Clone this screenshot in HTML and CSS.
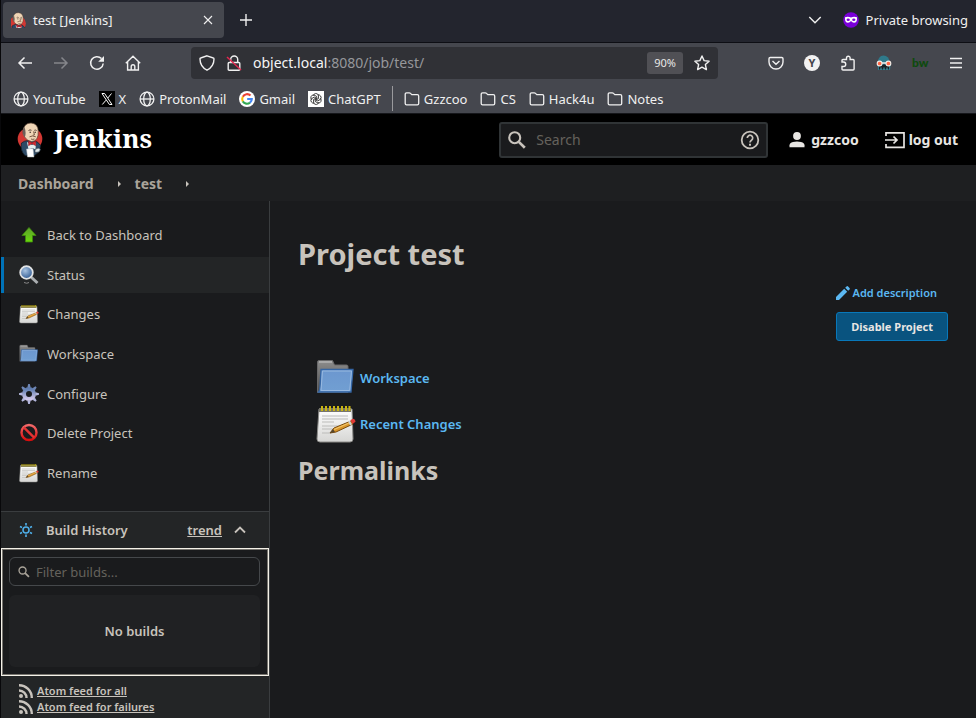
FILE: index.html
```html
<!DOCTYPE html>
<html lang="en">
<head>
<meta charset="utf-8">
<meta name="viewport" content="width=device-width, initial-scale=1">
<title>test [Jenkins]</title>
<link rel="stylesheet" href="styles.css">
</head>
<body>
<svg class="defs" aria-hidden="true">
  <defs>
    <linearGradient id="g-blue" x1="0" y1="0" x2="0" y2="1"><stop offset="0" stop-color="#6c97cf"/><stop offset="1" stop-color="#719fd2"/></linearGradient>
    <linearGradient id="g-grey" x1="0" y1="0" x2="0" y2="1"><stop offset="0" stop-color="#8d8d8d"/><stop offset="1" stop-color="#4c4c4c"/></linearGradient>
    <linearGradient id="g-green" x1="0" y1="0" x2="0" y2="1"><stop offset="0" stop-color="#5d9f2c"/><stop offset="1" stop-color="#69d80d"/></linearGradient>
    <linearGradient id="g-red" x1="0" y1="0" x2="0" y2="1"><stop offset="0" stop-color="#f26a6a"/><stop offset="1" stop-color="#d90d0d"/></linearGradient>
    <linearGradient id="g-gear" x1="0" y1="0" x2="0" y2="1"><stop offset="0" stop-color="#5f7db0"/><stop offset="1" stop-color="#d2c8ea"/></linearGradient>
    <linearGradient id="g-page" x1="0" y1="0" x2="0" y2="1"><stop offset="0" stop-color="#ffffff"/><stop offset="1" stop-color="#d6d6d4"/></linearGradient>
    <radialGradient id="g-lens" cx=".4" cy=".35" r=".7"><stop offset="0" stop-color="#a9c4e2"/><stop offset="1" stop-color="#2b568f"/></radialGradient>
  </defs>
  <symbol id="globe" viewBox="0 0 16 16"><g fill="none" stroke="currentColor" stroke-width="1.3"><circle cx="8" cy="8" r="6.9"/><ellipse cx="8" cy="8" rx="3.3" ry="6.9"/><path d="M1 8h14"/></g></symbol>
  <symbol id="folder" viewBox="0 0 16 16"><path d="M1.2 12.500V3.200Q1.200 1.800 2.600 1.800H5.200Q6 1.800 6.500 2.400L7.800 3.700H13.300Q14.700 3.700 14.700 5.100V12.500Q14.700 13.800 13.300 13.800H2.600Q1.200 13.800 1.200 12.500Z" fill="none" stroke="currentColor" stroke-width="1.300"/></symbol>
  <symbol id="search" viewBox="0 0 24 24"><circle cx="9.500" cy="9.500" r="6" fill="none" stroke="currentColor" stroke-width="2.300"/><path d="M14 14l6.500 6.500" stroke="currentColor" stroke-width="2.900"/></symbol>
  <symbol id="notepad" viewBox="0 0 40 40">
    <path d="M3 5h33l1 30q0 3-3 3H4q-3 0-3-3z" fill="url(#g-page)" stroke="#8b8b88"/>
    <path d="M3 4h32v4H3z" fill="#77756a"/>
    <path d="M6 2v5M10 2v5M14 2v5M18 2v5M22 2v5M26 2v5M30 2v5M33.500 2v5" stroke="#c9b512" stroke-width="2"/>
    <path d="M6 12h26M6 15h26M6 18h12M6 22h24M6 25h18M6 29h9" stroke="#bcbcb9" stroke-width="1.200"/>
    <path d="M14 29l4-5 17-7 2 3-17 8z" fill="#d9962b" stroke="#7a4b0d" stroke-width="1"/>
    <path d="M18 25.500l16-7" stroke="#f2c56a" stroke-width="1.200"/>
    <path d="M14 29l3-4 2 3z" fill="#55452c"/>
    <path d="M33 17l2 4" stroke="#cfd2d4" stroke-width="2"/>
    <path d="M34.500 16l2.500-1.200q2 0 2.500 3L36.500 20z" fill="#e23a35"/>
  </symbol>
  <symbol id="workspace" viewBox="0 0 40 40">
    <path d="M1.500 34.500V4q0-1.500 1.500-1.500H16.500l2 4.500h12q1.500 0 1.500 1.500v26z" fill="url(#g-grey)" stroke="#69696a"/>
    <path d="M3 4h13" stroke="#c8c8c8"/>
    <path d="M5 11.500h32l-2 22.500H2.500Q4 32 4 29z" fill="url(#g-blue)" stroke="#3465a4" stroke-width="1.300"/>
    <path d="M6.500 13h29l-1.800 19.500H5z" fill="none" stroke="#98b9e0" stroke-width="1"/>
  </symbol>
  <symbol id="feed" viewBox="0 0 16 16"><g fill="none" stroke="currentColor" stroke-width="2.400"><path d="M1 7.500a7.500 7.500 0 0 1 7.500 7.500M1 2.200A12.800 12.800 0 0 1 13.800 15"/></g><circle cx="3" cy="13" r="2" fill="currentColor"/></symbol>
  <symbol id="butler" viewBox="0 0 28 36">
    <ellipse cx="14" cy="17" rx="12.300" ry="11.500" fill="#d33833"/>
    <path d="M5.500 21q3-2.500 7-2.500h5q5 1 7 5l-1 6-5 4H9q-5-5-3.500-12.500z" fill="#2d4a66" stroke="#152330" stroke-width=".8"/>
    <path d="M7 9Q8 1 15 1q7 .5 7.200 8 .3 5-1.200 7.500-2 3-5.500 3-4-.5-6.500-4Q6.800 13 7 9z" fill="#efd5b6" stroke="#5b4639" stroke-width=".7"/>
    <path d="M8.500 5Q6 7 6.800 11.500l2 4Q10.500 11 8.500 5z" fill="#6b5f58"/>
    <path d="M12.500 8.500q1.500-1.200 3-.2M18.300 8.300q1.300-.6 2.300.2" fill="none" stroke="#49362d" stroke-width=".9"/>
    <path d="M13.500 10.300h1.500M18.500 10.300H20" stroke="#2a211c" stroke-width="1.100"/>
    <path d="M17.500 9.500l1 3.300-1.700.4M13.500 14.800q3-1.700 6.300 0M15 17q1.800.8 3.500 0" fill="none" stroke="#6b4a38" stroke-width=".9"/>
    <path d="M11 20l5 3 4-2.500-.5 7-3-1.500-4 1.500z" fill="#e5eff0"/>
    <path d="M12.500 18.800l3.500 2 3.800-2v5l-3.800-2-3.500 2z" fill="#d3282f" stroke="#7b1318" stroke-width=".4"/>
    <path d="M10.500 27l6.500-.5 1 8.500h-6.500z" fill="#fff" stroke="#aab4ba" stroke-width=".5"/>
    <path d="M19 27.500q3.500-3 5.500 0l-1.500 2.500-4 .5z" fill="#dfe8ea" stroke="#34404a" stroke-width=".7"/>
  </symbol>
</svg>

<div class="tabbar">
  <div class="tab">
    <svg class="i16" viewBox="4 0 24 24"><use href="#butler" width="28" height="36"/></svg>
    <span class="tab-title">test [Jenkins]</span>
    <button class="icon-btn" aria-label="Close tab"><svg class="i16" viewBox="0 0 16 16"><path d="M4 4l8 8M12 4l-8 8" stroke="currentColor" stroke-width="1.100"/></svg></button>
  </div>
  <button class="icon-btn new-tab" aria-label="New tab"><svg class="i16" viewBox="0 0 16 16"><path d="M8 2v12M2 8h12" stroke="currentColor" stroke-width="1.400"/></svg></button>
  <button class="icon-btn all-tabs" aria-label="List all tabs"><svg class="i16" viewBox="0 0 16 16"><path d="M2.300 5L8 10.700 13.700 5" fill="none" stroke="currentColor" stroke-width="1.400"/></svg></button>
  <div class="private">
    <svg class="i16" viewBox="0 0 16 16"><circle cx="8" cy="8" r="7.800" fill="#7a00d8"/><path d="M2 5.200q3-1.200 6 .3 3-1.500 6-.3.300 5.600-3 5.600-1.700 0-3-1.800-1.300 1.800-3 1.800-3.300 0-3-5.600z" fill="#fff"/><ellipse cx="5.200" cy="7.800" rx="1.600" ry="1.300" fill="#7a00d8"/><ellipse cx="10.800" cy="7.800" rx="1.600" ry="1.300" fill="#7a00d8"/></svg>
    <span>Private browsing</span>
  </div>
</div>

<div class="toolbar">
  <div class="nav">
    <button class="icon-btn" aria-label="Back"><svg class="i16" viewBox="0 0 16 16"><path d="M15 8H2M7.500 2.500L2 8l5.500 5.500" fill="none" stroke="currentColor" stroke-width="1.500"/></svg></button>
    <button class="icon-btn dim" aria-label="Forward"><svg class="i16" viewBox="0 0 16 16"><path d="M1 8h13M8.500 2.500L14 8l-5.500 5.500" fill="none" stroke="currentColor" stroke-width="1.500"/></svg></button>
    <button class="icon-btn" aria-label="Reload"><svg class="i16" viewBox="0 0 16 16"><path d="M14.200 8.500A6.300 6.300 0 1 1 12.500 3.600" fill="none" stroke="currentColor" stroke-width="1.500"/><path d="M15 1v5.800H9.200z" fill="currentColor"/></svg></button>
    <button class="icon-btn" aria-label="Home"><svg class="i16" viewBox="0 0 16 16"><path d="M.8 8.200L8 1.200l7.200 7M2.600 7v8h10.800V7M6.200 15v-3.500q0-1.800 1.800-1.800t1.800 1.800V15" fill="none" stroke="currentColor" stroke-width="1.400"/></svg></button>
  </div>
  <div class="urlbar">
    <svg class="i16" viewBox="0 0 16 16"><path d="M8 .8l6.300 2.200q.7 0 .7 1Q15 11.500 8 15.200 1 11.500 1 4q0-1 .7-1z" fill="none" stroke="currentColor" stroke-width="1.400"/></svg>
    <svg class="i16" viewBox="0 0 16 16"><path d="M3.200 7.500h9.600q1 0 1 1v5.800q0 1-1 1H3.200q-1 0-1-1V8.500q0-1 1-1zM4.700 7.500V4.500a3.500 3.500 0 0 1 7 0v3" fill="none" stroke="currentColor" stroke-width="1.400"/><path d="M1 2l14 13" stroke="#e22850" stroke-width="1.500"/></svg>
    <span class="url"><b>object.local</b>:8080/job/test/</span>
    <button class="zoom">90%</button>
    <button class="icon-btn" aria-label="Bookmark"><svg class="i16" viewBox="0 0 16 16"><path d="M8 1l2.100 4.600 5 .6-3.700 3.400 1 5L8 12.100l-4.400 2.500 1-5L.9 6.200l5-.6z" fill="none" stroke="currentColor" stroke-width="1.400" stroke-linejoin="round"/></svg></button>
  </div>
  <div class="extensions">
    <button class="icon-btn" aria-label="Pocket"><svg class="i16" viewBox="0 0 16 16"><path d="M2.300 2.500h11.400q1.300 0 1.300 1.300V7a7 7 0 0 1-14 0V3.800q0-1.300 1.300-1.300zM4.500 6L8 9.300 11.500 6" fill="none" stroke="currentColor" stroke-width="1.400"/></svg></button>
    <button class="icon-btn account" aria-label="Account">Y</button>
    <button class="icon-btn" aria-label="Extensions"><svg class="i16" viewBox="0 0 16 16"><path d="M2 7V5.500q0-1 1-1h3.500V3a1.800 1.800 0 0 1 3.600 0v1.500h3q1 0 1 1V14q0 1-1 1H3q-1 0-1-1v-2.500h1.500a1.900 1.900 0 0 0 0-4.500z" fill="none" stroke="currentColor" stroke-width="1.400"/></svg></button>
    <button class="icon-btn" aria-label="Hacker extension"><svg class="i16" viewBox="0 0 16 16"><path d="M1.500 8q0-4 3.500-7Q9-.5 12 2.500L14.800 8l-.8 7H2z" fill="#2f7a8b"/><path d="M3 9.500h10v5H3z" fill="#172126"/><path d="M5 12.500v2.500M8 12.500V15M11 12.500V15" stroke="#4da6b8"/><path d="M6 8h4" stroke="#eee" stroke-width="1.500"/><circle cx="3.600" cy="8.500" r="2.400" fill="#ff6545" stroke="#f2eee8" stroke-width="1.100"/><circle cx="12.400" cy="8.500" r="2.400" fill="#ff6545" stroke="#f2eee8" stroke-width="1.100"/></svg></button>
    <button class="icon-btn bw" aria-label="bw extension">bw</button>
    <button class="icon-btn" aria-label="Menu"><svg class="i16" viewBox="0 0 16 16"><path d="M2 3.500h12M2 8h12M2 12.500h12" stroke="currentColor" stroke-width="1.500"/></svg></button>
  </div>
</div>

<nav class="bookmarks" aria-label="Bookmarks">
  <a href="#"><svg class="i16"><use href="#globe"/></svg>YouTube</a>
  <a href="#"><svg class="i16" viewBox="0 0 16 16"><path d="M0 0h16v16H0z" fill="#000"/><path d="M3 2.500h2.600l7.400 11h-2.600zM12.500 2.500L8.800 7M7 9.200l-3.700 4.300" fill="none" stroke="#fff" stroke-width="1"/></svg>X</a>
  <a href="#"><svg class="i16"><use href="#globe"/></svg>ProtonMail</a>
  <a href="#"><svg class="i16" viewBox="0 0 16 16"><circle cx="8" cy="8" r="8" fill="#fff"/><g fill="none" stroke-width="2.100"><path d="M11.500 4.600A4.800 4.800 0 0 0 3.800 5.700" stroke="#ea4335"/><path d="M3.800 5.700a4.800 4.800 0 0 0 0 4.700" stroke="#fbbc05"/><path d="M3.800 10.400a4.800 4.800 0 0 0 7.200 1.200" stroke="#34a853"/><path d="M11 11.600Q12.800 10.200 12.800 8H8.200" stroke="#4285f4"/></g></svg>Gmail</a>
  <a href="#"><svg class="i16" viewBox="0 0 16 16"><path d="M0 0h16v16H0z" fill="#fff"/><g fill="none" stroke="#222" stroke-width=".8"><path id="petal" d="M5.300 4.700a2.700 2.700 0 0 1 5.200-.4L10.500 7.500 8 9"/><use href="#petal" transform="rotate(60 8 8)"/><use href="#petal" transform="rotate(120 8 8)"/><use href="#petal" transform="rotate(180 8 8)"/><use href="#petal" transform="rotate(240 8 8)"/><use href="#petal" transform="rotate(300 8 8)"/></g></svg>ChatGPT</a>
  <span class="divider"></span>
  <a href="#"><svg class="i16"><use href="#folder"/></svg>Gzzcoo</a>
  <a href="#"><svg class="i16"><use href="#folder"/></svg>CS</a>
  <a href="#"><svg class="i16"><use href="#folder"/></svg>Hack4u</a>
  <a href="#"><svg class="i16"><use href="#folder"/></svg>Notes</a>
</nav>

<header class="header">
  <a class="brand" href="#"><svg class="butler"><use href="#butler"/></svg><span>Jenkins</span></a>
  <form class="search">
    <svg class="i22"><use href="#search"/></svg>
    <input type="search" placeholder="Search" aria-label="Search">
    <a href="#" aria-label="Search help"><svg class="i22" viewBox="0 0 22 22"><circle cx="11" cy="11" r="8.300" fill="none" stroke="currentColor" stroke-width="1.800"/><path d="M8.300 9a2.700 2.700 0 1 1 4.200 2.200Q11 12.200 11 13.500" fill="none" stroke="currentColor" stroke-width="1.700"/><path d="M10 14.700h2v2h-2z" fill="currentColor"/></svg></a>
  </form>
  <a class="user" href="#"><svg class="i22" viewBox="0 0 22 22"><circle cx="11" cy="7" r="3.900" fill="currentColor"/><path d="M3.500 18.300v-2q0-2.300 3.500-3.300 4-1 8 0 3.500 1 3.500 3.300v2z" fill="currentColor"/></svg>gzzcoo</a>
  <a class="user" href="#"><svg class="i22" viewBox="0 0 22 22"><path d="M2 7V3.800h18v14.500H2V15" fill="none" stroke="currentColor" stroke-width="1.700"/><path d="M1 11h11M9.500 7.500L13 11l-3.500 3.500" fill="none" stroke="currentColor" stroke-width="1.700"/></svg>log out</a>
</header>

<nav class="crumbs" aria-label="Breadcrumb">
  <a href="#">Dashboard</a><span class="caret"></span><a href="#">test</a><span class="caret"></span>
</nav>

<div class="page">
  <aside class="side">
    <nav class="tasks">
      <a href="#"><svg class="i20" viewBox="0 0 20 20"><path d="M10 2.500l7 8h-3.500V17h-7v-6.500H3z" fill="url(#g-green)" stroke="#3d8a0a" stroke-width=".8"/></svg>Back to Dashboard</a>
      <a href="#" class="active"><svg class="i20" viewBox="0 0 20 20"><path d="M12 12l6.500 6" stroke="#aaaeb0" stroke-width="3"/><circle cx="7.500" cy="7.500" r="6.300" fill="url(#g-lens)" stroke="#e2e4e5" stroke-width="1.800"/><path d="M5 17.500q3 1.500 5 0" fill="none" stroke="#888"/></svg>Status</a>
      <a href="#"><svg class="i20"><use href="#notepad"/></svg>Changes</a>
      <a href="#"><svg class="i20"><use href="#workspace"/></svg>Workspace</a>
      <a href="#"><svg class="i20" viewBox="0 0 20 20"><g stroke="url(#g-gear)"><circle cx="10" cy="10" r="5" fill="none" stroke-width="4"/></g><g fill="#a5aed5"><path id="cog" d="M8.300 3.500L9.200 0h1.600l.9 3.500z" fill="#6e86b5"/><use href="#cog" transform="rotate(45 10 10)"/><use href="#cog" transform="rotate(315 10 10)"/></g><g><path id="tooth" d="M8.300 3.500L9.200 0h1.600l.9 3.500z" transform="rotate(90 10 10)" fill="#b3b6dc"/><use href="#tooth" transform="rotate(45 10 10)"/><use href="#tooth" transform="rotate(90 10 10)"/><use href="#tooth" transform="rotate(135 10 10)"/><use href="#tooth" transform="rotate(180 10 10)"/></g></svg>Configure</a>
      <a href="#"><svg class="i20" viewBox="0 0 20 20"><circle cx="10" cy="9.500" r="7.500" fill="none" stroke="url(#g-red)" stroke-width="2.400"/><path d="M4.800 4.300l10.400 10.400" stroke="#e43434" stroke-width="2.400"/></svg>Delete Project</a>
      <a href="#"><svg class="i20"><use href="#notepad"/></svg>Rename</a>
    </nav>
    <section class="history">
      <div class="history-head">
        <svg class="i14" viewBox="0 0 14 14"><circle cx="7" cy="7" r="3" fill="none" stroke="currentColor" stroke-width="1.500"/><path d="M7 0v2.500M7 11.500V14M1 3.500l2 1M11 4.500l2-1M1 10.500l2-1M11 9.500l2 1" stroke="currentColor" stroke-width="1.600"/></svg>
        <h2>Build History</h2>
        <a href="#">trend</a>
        <button class="icon-btn" aria-label="Collapse"><svg class="i12" viewBox="0 0 12 12"><path d="M1 8.500l5-5 5 5" fill="none" stroke="currentColor" stroke-width="1.800"/></svg></button>
      </div>
      <div class="builds">
        <label class="filter"><svg class="i14"><use href="#search"/></svg><input type="search" placeholder="Filter builds..." aria-label="Filter builds"></label>
        <div class="empty">No builds</div>
      </div>
      <div class="feeds">
        <a href="#"><svg class="i16"><use href="#feed"/></svg><span>Atom feed for all</span></a>
        <a href="#"><svg class="i16"><use href="#feed"/></svg><span>Atom feed for failures</span></a>
      </div>
    </section>
  </aside>
  <main class="main">
    <h1>Project test</h1>
    <div class="actions">
      <a href="#"><svg class="i14" viewBox="0 0 14 14"><path d="M0 14v-3L8.200 2.800l3 3L3 14zM9.200 1.800L10.500.5q.8-.8 1.600 0l1.400 1.400q.8.800 0 1.600L12.200 4.800z" fill="currentColor"/></svg>Add description</a>
      <button class="primary">Disable Project</button>
    </div>
    <div class="links">
      <a href="#"><svg class="i40"><use href="#workspace"/></svg>Workspace</a>
      <a href="#"><svg class="i40"><use href="#notepad"/></svg>Recent Changes</a>
    </div>
    <h2>Permalinks</h2>
  </main>
</div>
</body>
</html>
```
FILE: styles.css
```css
* { box-sizing: border-box; }

body {
  margin: 0;
  min-height: 100vh;
  display: flex;
  flex-direction: column;
  border-left: 1px solid #08080a;
  background: #1a1b1d;
  color: #c8c3bc;
  font-family: "Noto Sans", sans-serif;
  font-size: 13px;
  line-height: 18px;
}

a { color: inherit; text-decoration: none; }
svg { display: block; flex: none; }
h1, h2 { margin: 0; }
input { min-width: 0; flex: 1; padding: 0; border: 0; outline: 0; background: none; color: inherit; font: inherit; }
input::placeholder { color: #65625c; opacity: 1; }

.defs { position: absolute; width: 0; height: 0; }
.i12 { width: 12px; height: 12px; }
.i14 { width: 14px; height: 14px; }
.i16 { width: 16px; height: 16px; }
.i20 { width: 20px; height: 20px; }
.i22 { width: 22px; height: 22px; }
.i40 { width: 40px; height: 40px; }

.icon-btn { display: block; flex: none; padding: 0; border: 0; background: none; color: inherit; }
.dim { color: #85868b; }

/* Browser frame */
.tabbar {
  display: flex;
  align-items: center;
  height: 43px;
  padding: 0 8px 2px 2px;
  border-bottom: 1px solid #0d0e14;
  background: #23252e;
  color: #f0f0f0;
}
.tab {
  display: flex;
  align-items: center;
  gap: 6px;
  width: 221px;
  height: 36px;
  padding: 0 8px;
  border-radius: 4px;
  background: #45474e;
}
.tab-title { flex: 1; }
.new-tab { margin-left: 14px; }
.all-tabs { margin-left: auto; }
.private { display: flex; gap: 7px; align-items: center; margin-left: 20px; }

.toolbar {
  display: flex;
  align-items: center;
  height: 40px;
  padding: 0 12px 0 16px;
  background: #45474e;
  color: #f0f0f0;
}
.nav { display: flex; gap: 20px; }
.urlbar {
  display: flex;
  flex: 1;
  align-items: center;
  gap: 11px;
  height: 32px;
  margin: 0 50px;
  padding: 0 8px;
  border-radius: 4px;
  background: #303136;
  font-size: 14px;
}
.url { flex: 1; color: #96979b; }
.url b { color: #f5f5f5; font-weight: 400; }
.zoom { height: 22px; padding: 0 7px; border: 0; border-radius: 3px; background: #505055; color: #e8e8e8; font: 11px/22px "Noto Sans", sans-serif; }
.extensions { display: flex; gap: 20px; }
.account { width: 16px; height: 16px; border-radius: 50%; background: #f2f2f2; color: #45474e; font: bold 11px/16px "Noto Sans", sans-serif; }
.bw { width: 16px; color: #0d4a0d; font: 900 12px/16px Lato, sans-serif; }

.bookmarks {
  display: flex;
  align-items: center;
  gap: 13px;
  height: 31px;
  padding: 1px 12px 0;
  border-bottom: 1px solid #15161a;
  background: #45474e;
  color: #f0f0f0;
}
.bookmarks a { display: flex; align-items: center; gap: 4px; }
.divider { width: 1px; height: 25px; margin: 0 -2px; background: #9a9a9d; }

/* Jenkins header */
.header {
  display: flex;
  align-items: center;
  height: 51px;
  padding: 0 18px 0 15px;
  background: #000;
  color: #e8e6e3;
}
.brand { display: flex; align-items: center; gap: 10px; margin-right: auto; color: #fff; font: bold 26px/34px "Noto Serif", "DejaVu Serif", serif; }
.brand span { padding-bottom: 4px; }
.butler { width: 28px; height: 36px; }
.search {
  display: flex;
  align-items: center;
  gap: 8px;
  width: 269px;
  height: 36px;
  padding: 0 5px;
  border: 2px solid #303436;
  border-radius: 3px;
  background: #1a1b1d;
  color: #c8c3bc;
  font-size: 14px;
}
.user { display: flex; align-items: center; gap: 3px; margin-left: 18px; font-size: 14px; font-weight: 700; }
.user + .user { margin-left: 25px; }

.crumbs { display: flex; align-items: center; height: 36px; padding: 2px 17px 0; background: #1e1f21; color: #aaa49a; font-size: 14px; font-weight: 700; }
.caret { margin: 0 14px 0 24px; border: 3px solid transparent; border-right: 0; border-left-color: #c8c3bc; }

/* Page */
.page { display: grid; grid-template-columns: 269px 1fr; flex: 1; }
.side { display: flex; flex-direction: column; border-right: 1px solid #3a3d3f; }
.tasks { display: grid; align-content: space-between; height: 274px; margin: 16px 0 20px; }
.tasks a { display: flex; align-items: center; gap: 8px; height: 36px; padding: 0 15px; border-left: 3px solid transparent; }
.tasks .active { border-color: #0073b8; background: #232526; }

.history { display: flex; flex-direction: column; flex: 1; }
.history-head { display: flex; align-items: center; height: 37px; padding: 0 23px 0 18px; border-top: 1px solid #3a3d3f; background: #232526; }
.history-head svg { color: #4fb0ea; }
.history-head h2 { flex: 1; margin-left: 13px; font-size: 13px; font-weight: 600; line-height: 18px; }
.history-head a { font-weight: 600; text-decoration: underline; }
.history-head .icon-btn { margin-left: 12px; }
.history-head .icon-btn svg { color: #c8c3bc; }
.builds { display: grid; gap: 9px; padding: 8px 8px 8px 7px; border: 1px solid #f4f1e8; outline: 1px solid #77756f; outline-offset: -2px; }
.filter { display: flex; align-items: center; gap: 5px; height: 29px; padding: 0 7px; border: 1px solid #45484b; border-radius: 6px; color: #aaa49a; }
.empty { display: grid; place-items: center; height: 72px; border-radius: 6px; background: #202123; color: #c8c3bc; font-weight: 600; }
.feeds { flex: 1; padding: 7px 17px 0; background: #232526; font-size: 11px; font-weight: 600; line-height: 16px; }
.feeds a { display: flex; gap: 3px; }
.feeds span { text-decoration: underline; }

.main { padding: 33px 28px 0; }
.main h1 { font-size: 29px; line-height: 40px; }
.main h2 { font-size: 25px; line-height: 36px; }
.actions { display: flex; flex-direction: column; align-items: flex-end; gap: 10px; margin-top: 10px; color: #5bb8f2; font-size: 11px; font-weight: 600; }
.actions a { display: flex; align-items: center; gap: 3px; margin-right: 11px; }
.primary { height: 29px; padding: 0 14px; border: 1px solid #0878ba; border-radius: 3px; background: #09537f; color: #e8e6e3; font: bold 11px "Noto Sans", sans-serif; }
.links { display: grid; gap: 6px; margin: 17px 0 8px 18px; color: #5bb8f2; font-weight: 600; }
.links a { display: flex; align-items: center; gap: 4px; width: max-content; }
```
